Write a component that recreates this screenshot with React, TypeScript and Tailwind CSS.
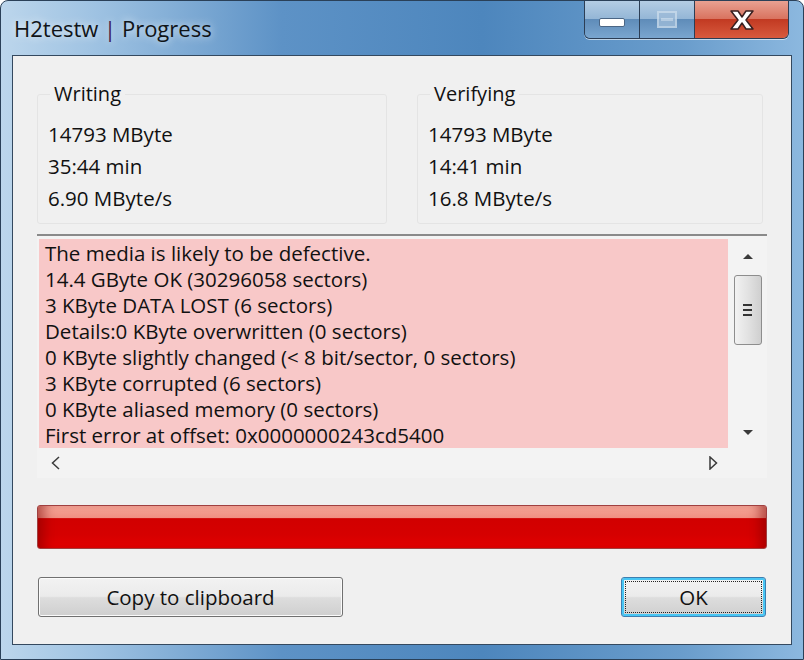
import React from 'react';

const font = { fontFamily: '"Open Sans", "Noto Sans", sans-serif' };

const reportLines = [
  'The media is likely to be defective.',
  '14.4 GByte OK (30296058 sectors)',
  '3 KByte DATA LOST (6 sectors)',
  'Details:0 KByte overwritten (0 sectors)',
  '0 KByte slightly changed (< 8 bit/sector, 0 sectors)',
  '3 KByte corrupted (6 sectors)',
  '0 KByte aliased memory (0 sectors)',
  'First error at offset: 0x0000000243cd5400',
];

const StatGroup = ({ title, values, className }: { title: string; values: string[]; className: string }) => (
  <div className={`relative border border-[#e4e4e4] rounded-[3px] h-[130px] ${className}`}>
    <span className="absolute -top-[14px] left-[12px] px-[4px] bg-[#f0f0f0] text-[20px] leading-[26px] text-[#111]">
      {title}
    </span>
    <div className="flex flex-col pt-[23px] pl-[10px] text-[20.5px] leading-[32px] text-[#111]">
      {values.map((v) => (
        <span key={v}>{v}</span>
      ))}
    </div>
  </div>
);

const TitleButtons = () => (
  <div className="flex h-[38px] mr-[14px] border border-t-0 border-[#2c3e55] rounded-b-[6px] overflow-hidden shadow-[0_1px_0_rgba(255,255,255,0.6)]">
    <div className="w-[55px] flex items-center justify-center bg-[linear-gradient(#b4cde4_0%,#94b6d6_48%,#5f8cb9_50%,#7aa6cf_100%)] border-r border-[#2c3e55]">
      <div className="w-[26px] h-[9px] bg-white rounded-[2px] border border-[#4b6685] mt-[6px]" />
    </div>
    <div className="w-[55px] flex items-center justify-center bg-[linear-gradient(#b4cde4_0%,#94b6d6_48%,#5f8cb9_50%,#7aa6cf_100%)] border-r border-[#2c3e55]">
      <div className="w-[20px] h-[17px] border-2 border-[#c9dbeb] bg-[#9dbbd8] flex items-center justify-center opacity-80">
        <div className="w-[12px] h-[3px] bg-[#c9dbeb]" />
      </div>
    </div>
    <div className="w-[93px] flex items-center justify-center bg-[linear-gradient(#e8a192_0%,#d9735f_48%,#c23a22_50%,#d85a3e_100%)]">
      <svg width="30" height="24" viewBox="0 0 30 24">
        <path
          d="M4 3 L11 3 L15 9 L19 3 L26 3 L19 12 L26 21 L19 21 L15 15 L11 21 L4 21 L11 12 Z"
          fill="#ffffff"
          stroke="#3a2020"
          strokeWidth="1.5"
          strokeLinejoin="round"
        />
      </svg>
    </div>
  </div>
);

export default function App() {
  return (
    <div
      className="w-[804px] h-[660px] flex flex-col overflow-hidden rounded-t-[8px] border border-[#2a4058] bg-[linear-gradient(90deg,#bcd6ec_0%,#9ec2e2_12%,#5d92c6_35%,#4d86bd_60%,#6a9dcc_85%,#8cb8df_100%)]"
      style={font}
    >
      <div className="h-[54px] flex items-start justify-between shrink-0">
        <div className="pl-[13px] pt-[12px] text-[22px] leading-[30px] text-[#101418] [text-shadow:0_0_8px_rgba(255,255,255,0.9)]">
          H2testw <span className="text-[#40204a]">|</span> Progress
        </div>
        <TitleButtons />
      </div>

      <div className="mx-[11px] h-[590px] bg-[#f0f0f0] border border-[#34495f] flex flex-col shrink-0">
        <div className="flex gap-[30px] pl-[24px] pr-[28px] pt-[38px]">
          <StatGroup title="Writing" values={['14793 MByte', '35:44 min', '6.90 MByte/s']} className="w-[350px]" />
          <StatGroup title="Verifying" values={['14793 MByte', '14:41 min', '16.8 MByte/s']} className="flex-1" />
        </div>

        <div className="mx-[24px] mt-[10px] h-[244px] border-t-2 border-[#8a8a8a] bg-[#f3f3f3] flex flex-col">
          <div className="flex h-[212px] pt-[3px]">
            <div className="ml-[2px] w-[689px] bg-[#f8c8c8] pt-[1px] pl-[6px] text-[20.5px] leading-[26px] text-[#111] whitespace-nowrap overflow-hidden">
              {reportLines.map((l) => (
                <div key={l}>{l}</div>
              ))}
            </div>
            <div className="flex-1 flex flex-col items-center">
              <svg width="12" height="8" viewBox="0 0 12 8" className="mt-[13px]">
                <path d="M1 7 L6 2 L11 7 Z" fill="#3a3a3a" />
              </svg>
              <div className="mt-[15px] w-[28px] h-[70px] rounded-[3px] border border-[#8d8d8d] bg-[linear-gradient(90deg,#f2f2f2,#e2e2e2_50%,#cfcfcf)] flex flex-col items-center justify-center gap-[3px]">
                <div className="w-[9px] h-[2px] bg-[#333]" />
                <div className="w-[9px] h-[2px] bg-[#333]" />
                <div className="w-[9px] h-[2px] bg-[#333]" />
              </div>
              <svg width="12" height="8" viewBox="0 0 12 8" className="mt-[84px]">
                <path d="M1 1 L6 6 L11 1 Z" fill="#3a3a3a" />
              </svg>
            </div>
          </div>
          <div className="flex items-center justify-between h-[32px] pl-[14px] pr-[49px]">
            <svg width="9" height="14" viewBox="0 0 9 14">
              <path d="M8 1 L1.5 7 L8 13" fill="none" stroke="#3a3a3a" strokeWidth="1.5" />
            </svg>
            <svg width="9" height="14" viewBox="0 0 9 14">
              <path d="M1 1 L7.5 7 L1 13 Z" fill="none" stroke="#3a3a3a" strokeWidth="1.5" />
            </svg>
          </div>
        </div>

        <div className="mx-[24px] mt-[27px] h-[44px] rounded-[3px] border border-[#a04040] bg-[linear-gradient(#f6a597_0%,#f08f82_28%,#d10000_30%,#d60000_70%,#e40000_100%)] shadow-[inset_14px_0_12px_-8px_rgba(120,0,0,0.5),inset_-14px_0_12px_-8px_rgba(120,0,0,0.5)]" />

        <div className="flex justify-between px-[25px] mt-[28px]">
          <button className="w-[305px] h-[40px] rounded-[3px] border border-[#707070] bg-[linear-gradient(#f2f2f2_0%,#ebebeb_48%,#dddddd_52%,#cfcfcf_100%)] text-[20.5px] text-[#111] shadow-[inset_0_0_0_1px_#fbfbfb]">
            Copy to clipboard
          </button>
          <button className="w-[145px] h-[40px] rounded-[3px] border border-[#3c7fb1] bg-[linear-gradient(#f2f2f2_0%,#ebebeb_48%,#dddddd_52%,#cfcfcf_100%)] text-[20.5px] text-[#111] shadow-[inset_0_0_0_2px_#48c6f4] p-[3px]">
            <span className="flex items-center justify-center w-full h-full border border-dotted border-[#222]">OK</span>
          </button>
        </div>
      </div>
    </div>
  );
}
